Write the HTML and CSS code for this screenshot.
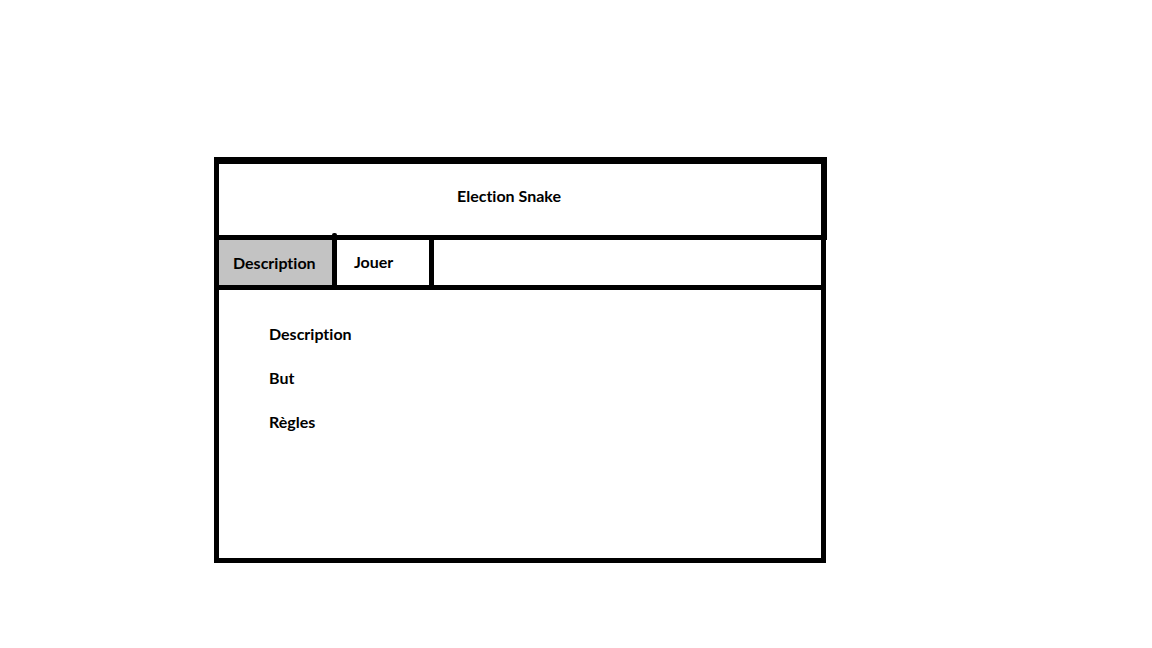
FILE: index.html
```html
<!DOCTYPE html>
<html lang="fr">
<head>
<meta charset="utf-8">
<meta name="viewport" content="width=device-width, initial-scale=1">
<title>Election Snake</title>
<link rel="stylesheet" href="styles.css">
</head>
<body class="page">
  <header class="banner">
    <h1 class="title">Election Snake</h1>
  </header>
  <div class="body">
    <nav class="tabs">
      <button type="button" class="tab tab-active">Description</button>
      <button type="button" class="tab tab-play">Jouer</button>
    </nav>
    <main class="panel">
      <h2 class="section">Description</h2>
      <h2 class="section">But</h2>
      <h2 class="section">Règles</h2>
    </main>
  </div>
</body>
</html>
```

FILE: styles.css
```css
* {
  box-sizing: border-box;
}

.page {
  display: flex;
  flex-direction: column;
  min-height: 100vh;
  margin: 0;
  padding: 157px 325px 85px 214px;
  background: #fff;
  color: #000;
  font: bold 16px/22px Lato, "Noto Sans", sans-serif;
  font-variant-ligatures: none;
}

.banner {
  padding: 21px 0 28px;
  border: solid #000;
  border-width: 7px 6px 5px 5px;
  text-align: center;
}

.title,
.section {
  margin: 0;
  font-size: 16px;
}

.title {
  padding-right: 22px;
}

.body {
  display: flex;
  flex: 1;
  flex-direction: column;
  margin-right: 1px;
  border: solid #000;
  border-width: 0 5px 5px;
}

.tabs {
  display: flex;
  border-bottom: 5px solid #000;
}

.tab {
  position: relative;
  padding: 11px 34px 12px 17px;
  border: 0;
  border-right: 5px solid #000;
  border-radius: 0;
  background: #fff;
  color: inherit;
  font: inherit;
  text-align: left;
  cursor: pointer;
}

.tab-active {
  flex: 0 0 118px;
  padding: 12px 0 11px 14px;
  background: #c3c3c3;
}

.tab-play {
  flex: 0 0 97px;
}

/* Rounded end of the divider above the tab row */
.tab-active::after {
  content: "";
  position: absolute;
  top: -7px;
  right: -5px;
  width: 5px;
  height: 5px;
  border-radius: 2px;
  background: #000;
}

.panel {
  display: flex;
  flex: 1;
  flex-direction: column;
  gap: 22px;
  padding: 33px 50px;
}
```
